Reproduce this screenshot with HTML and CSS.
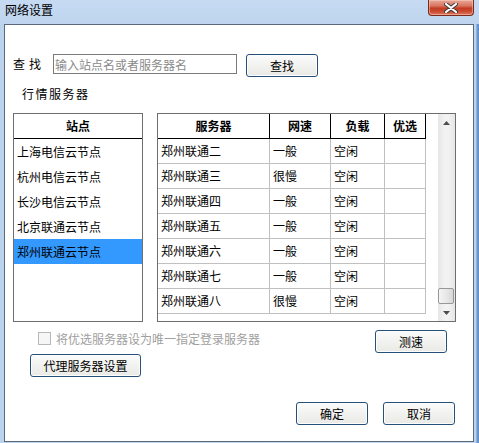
FILE: index.html
```html
<!DOCTYPE html>
<html lang="zh-CN">
<head>
    <meta charset="UTF-8">
    <meta name="viewport" content="width=device-width, initial-scale=1.0">
    <title>网络设置</title>
    <link rel="stylesheet" href="styles.css">
</head>
<body>
    <div class="titlebar">
        <span class="title">网络设置</span>
        <button type="button" class="closeButton">
            <svg width="14" height="10" viewBox="0 0 14 10">
                <path d="M2 1 L12 9 M12 1 L2 9" stroke="#3a3a3a" stroke-width="4" stroke-linecap="round"/>
                <path d="M2 1 L12 9 M12 1 L2 9" stroke="#fff" stroke-width="2.2" stroke-linecap="round"/>
            </svg>
        </button>
    </div>

    <div class="dialog">
        <div class="search">
            <span class="search__label">查找</span>
            <input type="text" class="search__input" placeholder="输入站点名或者服务器名">
            <button type="button" class="btn">查找</button>
        </div>

        <div class="groupTitle">行情服务器</div>

        <div class="panels">
            <div class="siteList">
                <div class="siteList__head">站点</div>
                <div class="siteList__item">上海电信云节点</div>
                <div class="siteList__item">杭州电信云节点</div>
                <div class="siteList__item">长沙电信云节点</div>
                <div class="siteList__item">北京联通云节点</div>
                <div class="siteList__item selected">郑州联通云节点</div>
            </div>

            <div class="serverBox">
                <div class="serverGrid" id="serverGrid">
                    <div class="headCell">服务器</div>
                    <div class="headCell">网速</div>
                    <div class="headCell">负载</div>
                    <div class="headCell">优选</div>
                </div>
                <div class="scrollbar">
                    <div class="scrollbar__arrow">
                        <svg width="7" height="4" viewBox="0 0 7 4"><path d="M0 4 L3.5 0 L7 4 Z" fill="#4d4d4d"/></svg>
                    </div>
                    <div class="scrollbar__track">
                        <div class="scrollbar__thumb"></div>
                    </div>
                    <div class="scrollbar__arrow">
                        <svg width="7" height="4" viewBox="0 0 7 4"><path d="M0 0 L7 0 L3.5 4 Z" fill="#4d4d4d"/></svg>
                    </div>
                </div>
            </div>
        </div>

        <div class="options">
            <div class="options__left">
                <label class="check">
                    <span class="check__box"></span>
                    <span>将优选服务器设为唯一指定登录服务器</span>
                </label>
                <button type="button" class="btn btnProxy">代理服务器设置</button>
            </div>
            <button type="button" class="btn btnSpeed">测速</button>
        </div>

        <div class="footer">
            <button type="button" class="btn">确定</button>
            <button type="button" class="btn">取消</button>
        </div>
    </div>

    <script>
        let servers = [
            ['郑州联通二', '一般', '空闲'],
            ['郑州联通三', '很慢', '空闲'],
            ['郑州联通四', '一般', '空闲'],
            ['郑州联通五', '一般', '空闲'],
            ['郑州联通六', '一般', '空闲'],
            ['郑州联通七', '一般', '空闲'],
            ['郑州联通八', '很慢', '空闲']
        ];

        for (let row of servers)
        {
            for (let text of row.concat(['']))
            {
                let div = document.createElement('div');
                div.className = 'cell';
                div.innerText = text;
                serverGrid.append(div);
            }
        }
    </script>
</body>
</html>
```

FILE: styles.css
```css
* {
    box-sizing: border-box;
    margin: 0px;
    padding: 0px;
}
body {
    width: 479px;
    height: 443px;
    overflow: hidden;
    font-family: "Noto Sans CJK SC", "Liberation Sans", sans-serif;
    font-size: 12px;
    color: #000;
    background: linear-gradient(to right, #bcd3ee 0px, #c3d8f0 474px, #b4cdea 476px, #6d9ad2 477px, #5f8fcc 479px);
}
.titlebar {
    height: 24px;
    display: flex;
    justify-content: space-between;
    align-items: flex-start;
    padding: 0px 5px 0px 5px;
    background: linear-gradient(#c6dbf2, #bed5ef);
}
.title {
    padding-top: 3px;
    line-height: 14px;
    font-size: 12px;
}
.closeButton {
    width: 46px;
    height: 16px;
    border: 1px solid #7b2a1c;
    border-top: none;
    border-radius: 0px 0px 4px 4px;
    background: linear-gradient(#e8a899 0%, #d8735e 40%, #c13c22 55%, #c94a30 75%, #dd7a60 100%);
    box-shadow: inset 0px 0px 0px 1px rgba(255, 220, 210, 0.45);
    display: flex;
    justify-content: center;
    align-items: center;
}
.dialog {
    width: 470px;
    height: 418px;
    margin-left: 4px;
    border: 1px solid #5a6a7c;
    background-color: #fff;
    display: flex;
    flex-direction: column;
}
.search {
    margin-top: 29px;
    padding-left: 8px;
    display: flex;
    align-items: flex-start;
}
.search__label {
    width: 40px;
    line-height: 20px;
    letter-spacing: 4px;
}
.search__input {
    width: 184px;
    height: 20px;
    border: 1px solid #7a7a7a;
    padding-left: 1px;
    font-family: inherit;
    font-size: 12px;
    outline: none;
}
.search__input::placeholder {
    color: #8a8a8a;
}
.search .btn {
    margin-left: 9px;
}
.btn {
    width: 72px;
    height: 23px;
    border: 1px solid #26507a;
    border-radius: 3px;
    background: linear-gradient(#fbfbfb 0%, #f2f2f0 50%, #e9e9e5 100%);
    box-shadow: inset 0px 0px 0px 1px #fdfdfd;
    font-family: inherit;
    font-size: 12px;
    color: #000;
    line-height: 20px;
}
.groupTitle {
    margin-top: 10px;
    padding-left: 17px;
    line-height: 14px;
    letter-spacing: 1.5px;
}
.panels {
    margin-top: 12px;
    padding-left: 8px;
    display: flex;
    gap: 14px;
}
.siteList {
    width: 130px;
    height: 209px;
    border: 1px solid #6e6e6e;
}
.siteList__head {
    height: 25px;
    border-bottom: 1px solid #000;
    text-align: center;
    font-weight: bold;
    line-height: 24px;
}
.siteList__item {
    height: 25px;
    line-height: 25px;
    padding-left: 3px;
}
.selected {
    background-color: #3399ff;
}
.serverBox {
    width: 299px;
    height: 209px;
    border: 1px solid #6e6e6e;
    display: flex;
    justify-content: space-between;
}
.serverGrid {
    display: grid;
    grid-template-columns: 112px 61px 54px 41px;
    grid-auto-rows: 25px;
    align-content: start;
}
.headCell, .cell {
    line-height: 24px;
    border-right: 1px solid #c0c0c0;
    border-bottom: 1px solid #c0c0c0;
}
.headCell {
    border-color: #000;
    text-align: center;
    font-weight: bold;
}
.cell {
    padding-left: 3px;
}
.scrollbar {
    width: 17px;
    display: flex;
    flex-direction: column;
    background: linear-gradient(to right, #e6e6e6, #f2f2f2 40%, #f2f2f2 60%, #e6e6e6);
}
.scrollbar__arrow {
    height: 17px;
    display: flex;
    justify-content: center;
    align-items: center;
}
.scrollbar__track {
    flex: 1;
    display: flex;
    flex-direction: column;
    justify-content: flex-end;
}
.scrollbar__thumb {
    width: 16px;
    height: 16px;
    margin-left: 0px;
    border: 1px solid #979797;
    border-radius: 2px;
    background: linear-gradient(to right, #f4f4f4, #e8e8e8 50%, #d8d8d8);
}
.options {
    display: flex;
    justify-content: space-between;
    align-items: flex-start;
    padding-right: 26px;
}
.options__left {
    display: flex;
    flex-direction: column;
    align-items: flex-start;
}
.check {
    margin-top: 10px;
    padding-left: 33px;
    display: flex;
    align-items: center;
    color: #a0a0a0;
    line-height: 13px;
}
.check__box {
    width: 13px;
    height: 13px;
    margin-right: 5px;
    border: 1px solid #b8b8b8;
    background-color: #f6f6f6;
}
.btnProxy {
    width: 111px;
    margin-top: 9px;
    margin-left: 25px;
}
.btnSpeed {
    margin-top: 8px;
}
.footer {
    margin-top: 25px;
    padding-right: 18px;
    display: flex;
    justify-content: flex-end;
    gap: 15px;
}
```
